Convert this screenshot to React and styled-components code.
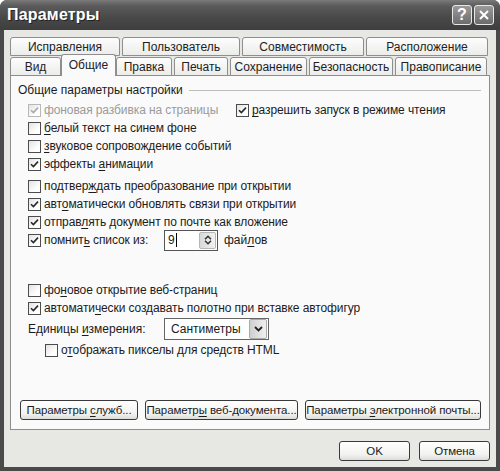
import styled, { createGlobalStyle } from "styled-components";

const Global = createGlobalStyle`
  html, body { margin: 0; padding: 0; background: #fff; }
  body { font-family: "Liberation Sans", Tahoma, sans-serif; font-size: 12px; color: #1a1a1a; }
`;

const Window = styled.div`
  width: 500px;
  height: 471px;
  box-sizing: border-box;
  display: flex;
  flex-direction: column;
  background: #4a4a4a;
  border-radius: 7px 7px 0 0;
  overflow: hidden;
`;

const TitleBar = styled.div`
  height: 30px;
  flex: 0 0 30px;
  display: flex;
  align-items: center;
  padding: 0 6px 0 7px;
  background: linear-gradient(#7a7a7a 0%, #5a5a5a 20%, #484848 60%, #3e3e3e 100%);
  color: #fff;
  font-weight: bold;
  font-size: 16px;
  text-shadow: 1px 1px 0 #222;
`;

const Title = styled.span`
  flex: 1;
  letter-spacing: 0.2px;
`;

const CaptionButton = styled.div`
  width: 20px;
  height: 20px;
  margin-left: 2px;
  box-sizing: border-box;
  border: 1px solid #e8e8e8;
  border-radius: 3px;
  background: linear-gradient(#9a9a9a, #6c6c6c);
  display: flex;
  align-items: center;
  justify-content: center;
  color: #fff;
  font-size: 16px;
  font-weight: bold;
  text-shadow: none;
`;

const Body = styled.div`
  flex: 1;
  margin: 0 4px 4px 4px;
  background: #e7e7e4;
  padding: 7px 6px 0 6px;
  display: flex;
  flex-direction: column;
`;

const TabRow = styled.div`
  display: flex;
  gap: 2px;
  height: ${(p) => p.$h}px;
  flex: 0 0 ${(p) => p.$h}px;
  align-items: flex-end;
  position: relative;
  z-index: ${(p) => p.$z || 0};
  margin-bottom: ${(p) => p.$mb || 0}px;
`;

const Tab = styled.div`
  width: ${(p) => p.$w}px;
  height: ${(p) => (p.$active ? 22 : 19)}px;
  flex: 0 0 auto;
  box-sizing: border-box;
  border: 1px solid #8e8e8e;
  border-bottom: ${(p) => (p.$active ? "none" : "1px solid #8e8e8e")};
  border-radius: 3px 3px 0 0;
  background: ${(p) => (p.$active ? "#fafafa" : "linear-gradient(#fdfdfd, #ececea)")};
  display: flex;
  align-items: center;
  justify-content: center;
  font-size: 12px;
  color: #222;
  margin: ${(p) => (p.$active ? "0 -2px" : "0")};
  position: relative;
  z-index: ${(p) => (p.$active ? 2 : 1)};
  padding-bottom: ${(p) => (p.$active ? 2 : 0)}px;
`;

const Panel = styled.div`
  height: 355px;
  flex: 0 0 355px;
  box-sizing: border-box;
  border: 1px solid #8e8e8e;
  background: #fafafa;
  padding: 6px 8px 0 7px;
  display: flex;
  flex-direction: column;
  position: relative;
  z-index: 1;
`;

const GroupHead = styled.div`
  display: flex;
  align-items: center;
  gap: 6px;
  font-size: 12px;
  height: 16px;
`;

const GroupLine = styled.div`
  flex: 1;
  height: 1px;
  background: #bdbdbd;
`;

const Options = styled.div`
  display: flex;
  flex-direction: column;
  padding-left: 10px;
  margin-top: ${(p) => p.$mt || 0}px;
`;

const Row = styled.div`
  display: flex;
  align-items: center;
  height: ${(p) => p.$h || 18}px;
  padding-left: ${(p) => p.$indent || 0}px;
`;

const Option = styled.label`
  display: flex;
  align-items: center;
  gap: 3px;
  font-size: 12px;
  letter-spacing: -0.1px;
  color: ${(p) => (p.$disabled ? "#9a9a9a" : "#1c1c1c")};
  width: ${(p) => (p.$w ? `${p.$w}px` : "auto")};
  flex: 0 0 auto;
  white-space: nowrap;
`;

const Box = styled.span`
  width: 13px;
  height: 13px;
  box-sizing: border-box;
  border: 1px solid ${(p) => (p.$disabled ? "#b8b8b8" : "#4c4c4c")};
  background: linear-gradient(135deg, #e2e2e2, #ffffff 70%);
  display: inline-flex;
  align-items: center;
  justify-content: center;
  flex: 0 0 13px;
`;

const U = styled.span`
  text-decoration: underline;
  text-underline-offset: 2px;
`;

const Check = ({ checked, disabled, children, w }) => (
  <Option $disabled={disabled} $w={w}>
    <Box $disabled={disabled}>
      {checked && (
        <svg width="9" height="9" viewBox="0 0 9 9">
          <path
            d="M1 4.2 L3.4 6.6 L8 1.6"
            fill="none"
            stroke={disabled ? "#aaa" : "#2a2a2a"}
            strokeWidth="1.6"
          />
        </svg>
      )}
    </Box>
    <span>{children}</span>
  </Option>
);

const Label = styled.span`
  font-size: 12px;
  width: ${(p) => p.$w}px;
  flex: 0 0 ${(p) => p.$w}px;
`;

const SpinField = styled.div`
  width: 54px;
  height: 21px;
  box-sizing: border-box;
  border: 1px solid #555;
  background: #fff;
  display: flex;
  align-items: stretch;
  margin: 0 6px 0 0;
`;

const SpinText = styled.div`
  flex: 1;
  padding-left: 3px;
  display: flex;
  align-items: center;
  font-size: 12px;
  &::after {
    content: "";
    width: 1px;
    height: 14px;
    background: #000;
    margin-left: 1px;
  }
`;

const SpinButtons = styled.div`
  width: 15px;
  margin: 1px;
  border-radius: 2px;
  background: linear-gradient(90deg, #d8d8d8, #f2f2f2);
  border: 1px solid #b6b6b6;
  display: flex;
  flex-direction: column;
  align-items: center;
  justify-content: center;
`;

const Select = styled.div`
  width: 105px;
  height: 22px;
  box-sizing: border-box;
  border: 1px solid #666;
  background: #fff;
  display: flex;
  align-items: center;
  padding: 1px;
  font-size: 12px;
`;

const SelectText = styled.div`
  flex: 1;
  padding-left: 5px;
`;

const SelectArrow = styled.div`
  width: 16px;
  height: 18px;
  border-radius: 2px;
  border: 1px solid #aaa;
  background: linear-gradient(90deg, #cfcfcf, #f0f0f0);
  display: flex;
  align-items: center;
  justify-content: center;
`;

const ButtonRow = styled.div`
  margin-top: auto;
  margin-bottom: 9px;
  display: flex;
  gap: 7px;
  padding-left: 2px;
`;

const Button = styled.div`
  width: ${(p) => p.$w}px;
  height: 20px;
  box-sizing: border-box;
  border: 1px solid #3a3a3a;
  border-radius: 3px;
  background: linear-gradient(#ffffff, #f2f2f0 70%, #dcdcda);
  display: flex;
  align-items: center;
  justify-content: center;
  font-size: 11.5px;
  letter-spacing: -0.1px;
  white-space: nowrap;
`;

const Footer = styled.div`
  display: flex;
  justify-content: flex-end;
  gap: 9px;
  padding: 11px 0 0 0;
`;

const Arrow = ({ dir }) => (
  <svg width="8" height="5" viewBox="0 0 8 5">
    <path
      d={dir === "up" ? "M1 4.2 L4 1.2 L7 4.2" : "M1 0.8 L4 3.8 L7 0.8"}
      fill="none"
      stroke="#333"
      strokeWidth="1.5"
    />
  </svg>
);

export default function App() {
  const back = [
    ["Исправления", 110],
    ["Пользователь", 118],
    ["Совместимость", 122],
    ["Расположение", 122],
  ];
  const front = [
    ["Вид", 51, false],
    ["Общие", 55, true],
    ["Правка", 56, false],
    ["Печать", 54, false],
    ["Сохранение", 77, false],
    ["Безопасность", 84, false],
    ["Правописание", 92, false],
  ];
  return (
    <>
      <Global />
      <Window>
        <TitleBar>
          <Title>Параметры</Title>
          <CaptionButton>?</CaptionButton>
          <CaptionButton>
            <svg width="12" height="12" viewBox="0 0 12 12">
              <path d="M2 2 L10 10 M10 2 L2 10" stroke="#fff" strokeWidth="2" />
            </svg>
          </CaptionButton>
        </TitleBar>
        <Body>
          <TabRow $h={19}>
            {back.map(([t, w]) => (
              <Tab key={t} $w={w}>
                {t}
              </Tab>
            ))}
          </TabRow>
          <TabRow $h={20} $z={2} $mb={-1}>
            {front.map(([t, w, a]) => (
              <Tab key={t} $w={w} $active={a}>
                {t}
              </Tab>
            ))}
          </TabRow>
          <Panel>
            <GroupHead>
              <span>Общие параметры настройки</span>
              <GroupLine />
            </GroupHead>
            <Options $mt={3}>
              <Row>
                <Check checked disabled w={208}>
                  фоновая разбивка на страницы
                </Check>
                <Check checked>
                  <U>р</U>азрешить запуск в режиме чтения
                </Check>
              </Row>
              <Row>
                <Check>
                  <U>б</U>елый текст на синем фоне
                </Check>
              </Row>
              <Row>
                <Check>
                  <U>з</U>вуковое сопровождение событий
                </Check>
              </Row>
              <Row>
                <Check checked>
                  эффекты <U>а</U>нимации
                </Check>
              </Row>
            </Options>
            <Options $mt={4}>
              <Row>
                <Check>
                  подтвер<U>ж</U>дать преобразование при открытии
                </Check>
              </Row>
              <Row>
                <Check checked>
                  авт<U>о</U>матически обновлять связи при открытии
                </Check>
              </Row>
              <Row>
                <Check checked>
                  отправ<U>л</U>ять документ по почте как вложение
                </Check>
              </Row>
              <Row>
                <Check checked w={136}>
                  помнит<U>ь</U> список из:
                </Check>
                <SpinField>
                  <SpinText>9</SpinText>
                  <SpinButtons>
                    <Arrow dir="up" />
                    <Arrow dir="down" />
                  </SpinButtons>
                </SpinField>
                <span>
                  фай<U>л</U>ов
                </span>
              </Row>
            </Options>
            <Options $mt={32}>
              <Row>
                <Check>
                  фо<U>н</U>овое открытие веб-страниц
                </Check>
              </Row>
              <Row>
                <Check checked>
                  автомати<U>ч</U>ески создавать полотно при вставке автофигур
                </Check>
              </Row>
              <Row $h={24}>
                <Label $w={136}>
                  Единицы <U>и</U>змерения:
                </Label>
                <Select>
                  <SelectText>Сантиметры</SelectText>
                  <SelectArrow>
                    <svg width="9" height="6" viewBox="0 0 9 6">
                      <path d="M1 1 L4.5 4.5 L8 1" fill="none" stroke="#222" strokeWidth="1.8" />
                    </svg>
                  </SelectArrow>
                </Select>
              </Row>
              <Row $indent={17}>
                <Check>
                  о<U>т</U>ображать пикселы для средств HTML
                </Check>
              </Row>
            </Options>
            <ButtonRow>
              <Button $w={118}>
                <span>
                  Параметры <U>с</U>лужб...
                </span>
              </Button>
              <Button $w={153}>
                <span>
                  Параметр<U>ы</U> веб-документа...
                </span>
              </Button>
              <Button $w={176}>
                <span>
                  Параметры <U>э</U>лектронной почты...
                </span>
              </Button>
            </ButtonRow>
          </Panel>
          <Footer>
            <Button $w={71}>OK</Button>
            <Button $w={71}>Отмена</Button>
          </Footer>
        </Body>
      </Window>
    </>
  );
}
